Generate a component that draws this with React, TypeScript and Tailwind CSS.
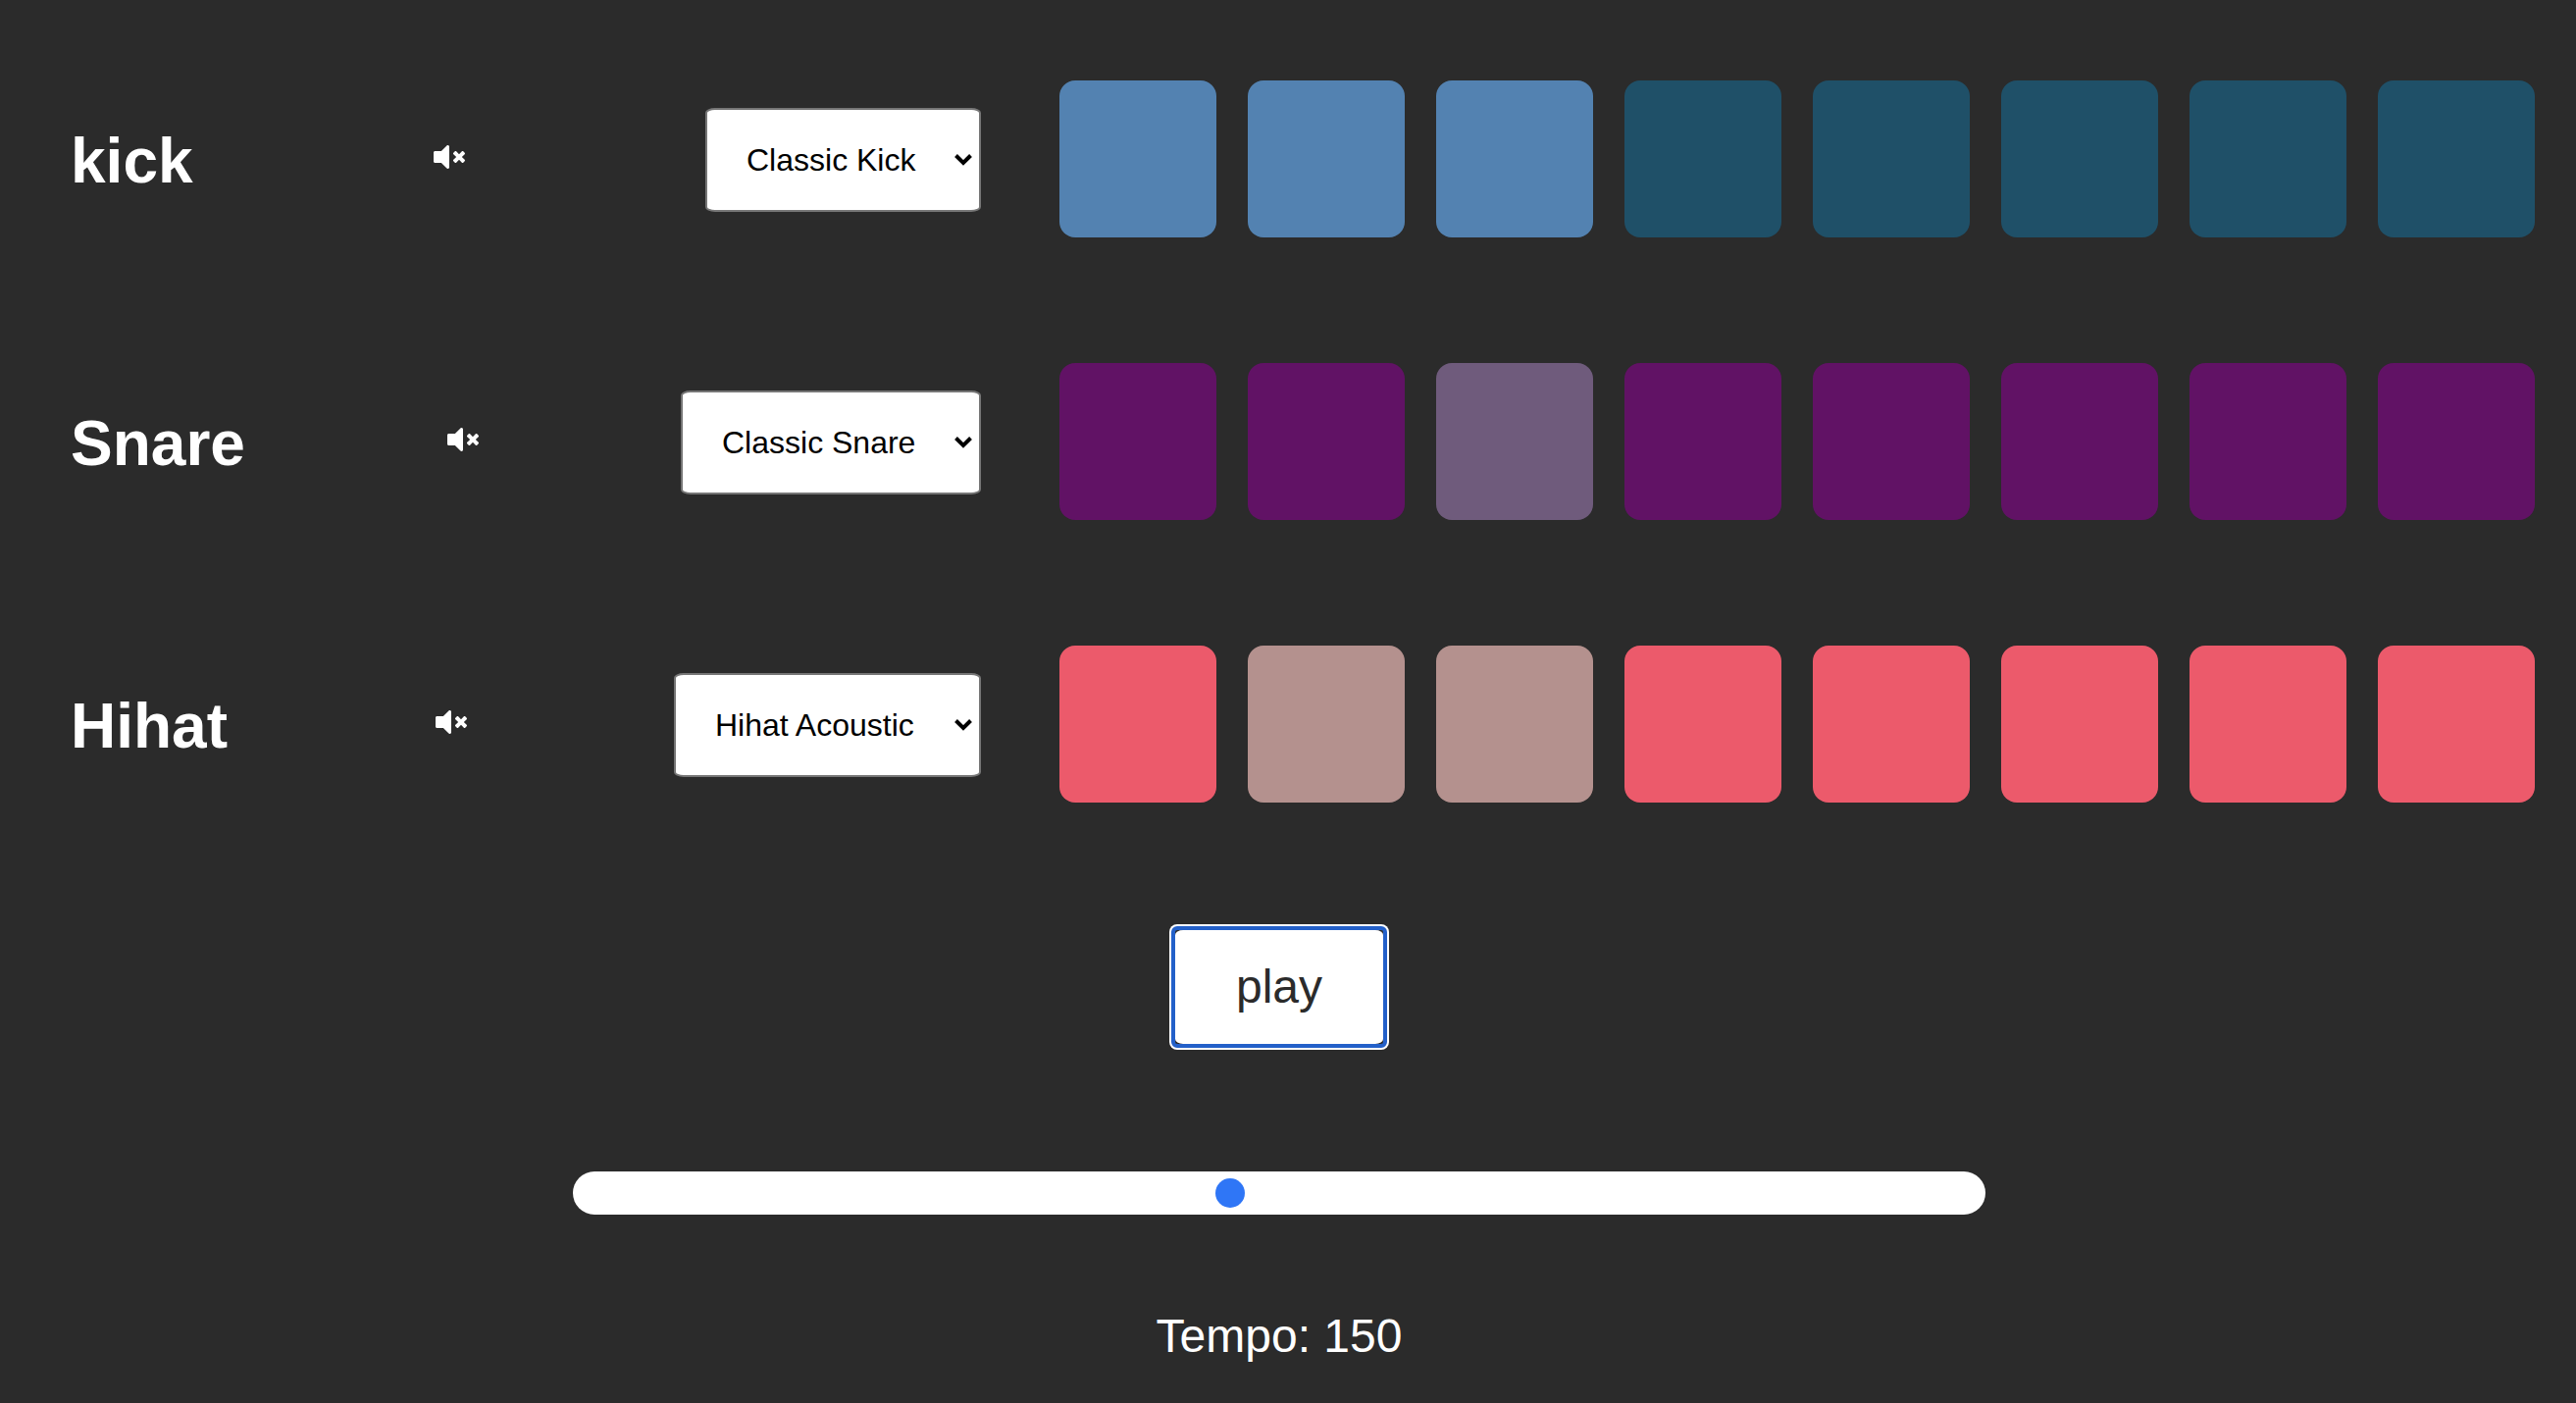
import { useState } from "react";
import { FaVolumeMute } from "react-icons/fa";

type Track = {
  name: string;
  sound: string;
  idle: string;
  active: string;
  steps: boolean[];
};

const initialTracks: Track[] = [
  {
    name: "kick",
    sound: "Classic Kick",
    idle: "bg-[#1f5068]",
    active: "bg-[#5382b1]",
    steps: [true, true, true, false, false, false, false, false],
  },
  {
    name: "Snare",
    sound: "Classic Snare",
    idle: "bg-[#611265]",
    active: "bg-[#6f5b7c]",
    steps: [false, false, true, false, false, false, false, false],
  },
  {
    name: "Hihat",
    sound: "Hihat Acoustic",
    idle: "bg-[#ec5a6b]",
    active: "bg-[#b4918e]",
    steps: [false, true, true, false, false, false, false, false],
  },
];

function SoundSelect({ track, sound }: { track: string; sound: string }) {
  return (
    <div className="relative">
      <select
        aria-label={`${track} sound`}
        className="block h-[106px] appearance-none rounded-[10px/5px] border-2 border-[#767676] bg-white pl-10 pr-16 text-[32px] leading-9 text-black"
      >
        <option>{sound}</option>
      </select>
      <svg
        viewBox="0 0 18 12"
        className="pointer-events-none absolute right-[9px] top-1/2 h-3 w-[18px] -translate-y-1/2"
        fill="none"
        stroke="black"
        strokeWidth="4"
        aria-hidden="true"
      >
        <path d="M1.5 1.5 L9 9 L16.5 1.5" />
      </svg>
    </div>
  );
}

function TrackRow({ track, onToggle }: { track: Track; onToggle: (step: number) => void }) {
  return (
    <section className="flex items-center gap-20">
      <div className="flex flex-1 items-center justify-between pl-[72px] pt-0.5">
        <h1 className="pt-0.5 text-[64px] font-bold leading-[72px]">{track.name}</h1>
        <button type="button" aria-label={`Mute ${track.name}`} className="pb-1.5">
          <FaVolumeMute className="size-8" />
        </button>
        <SoundSelect track={track.name} sound={track.sound} />
      </div>
      <div className="flex gap-8">
        {track.steps.map((on, i) => (
          <button
            key={i}
            type="button"
            aria-label={`${track.name} step ${i + 1}`}
            aria-pressed={on}
            onClick={() => onToggle(i)}
            className={`size-40 rounded-2xl ${on ? track.active : track.idle}`}
          />
        ))}
      </div>
    </section>
  );
}

export default function App() {
  const [tracks, setTracks] = useState(initialTracks);
  const [tempo, setTempo] = useState(150);

  const toggle = (row: number, step: number) =>
    setTracks((prev) =>
      prev.map((t, r) => (r === row ? { ...t, steps: t.steps.map((s, i) => (i === step ? !s : s)) } : t)),
    );

  return (
    <main className="min-h-screen bg-[#2b2b2b] pr-[18px] pt-[82px] font-['Helvetica_Neue','Liberation_Sans',Arial,sans-serif] text-white">
      <div className="flex flex-col gap-32 pr-6">
        {tracks.map((track, row) => (
          <TrackRow key={track.name} track={track} onToggle={(step) => toggle(row, step)} />
        ))}
      </div>
      <div className="flex flex-col items-center pt-[124px]">
        <div className="rounded-lg bg-white p-0.5">
          <div className="rounded-md border-4 border-[#2360c9] bg-[#2b2b2b]">
            <button
              type="button"
              className="block rounded-[8px/5px] bg-white px-[62px] py-[30px] text-5xl leading-14 text-[#2b2b2b]"
            >
              play
            </button>
          </div>
        </div>
        <input
          id="tempo"
          type="range"
          min={20}
          max={300}
          value={tempo}
          onChange={(e) => setTempo(Number(e.target.value))}
          className="mt-[124px] h-11 w-full max-w-[1440px] appearance-none rounded-full bg-white [&::-webkit-slider-thumb]:size-[30px] [&::-webkit-slider-thumb]:appearance-none [&::-webkit-slider-thumb]:rounded-full [&::-webkit-slider-thumb]:bg-[#2f76f6]"
        />
        <label htmlFor="tempo" className="mt-24 text-5xl leading-14">
          Tempo: {tempo}
        </label>
      </div>
    </main>
  );
}
